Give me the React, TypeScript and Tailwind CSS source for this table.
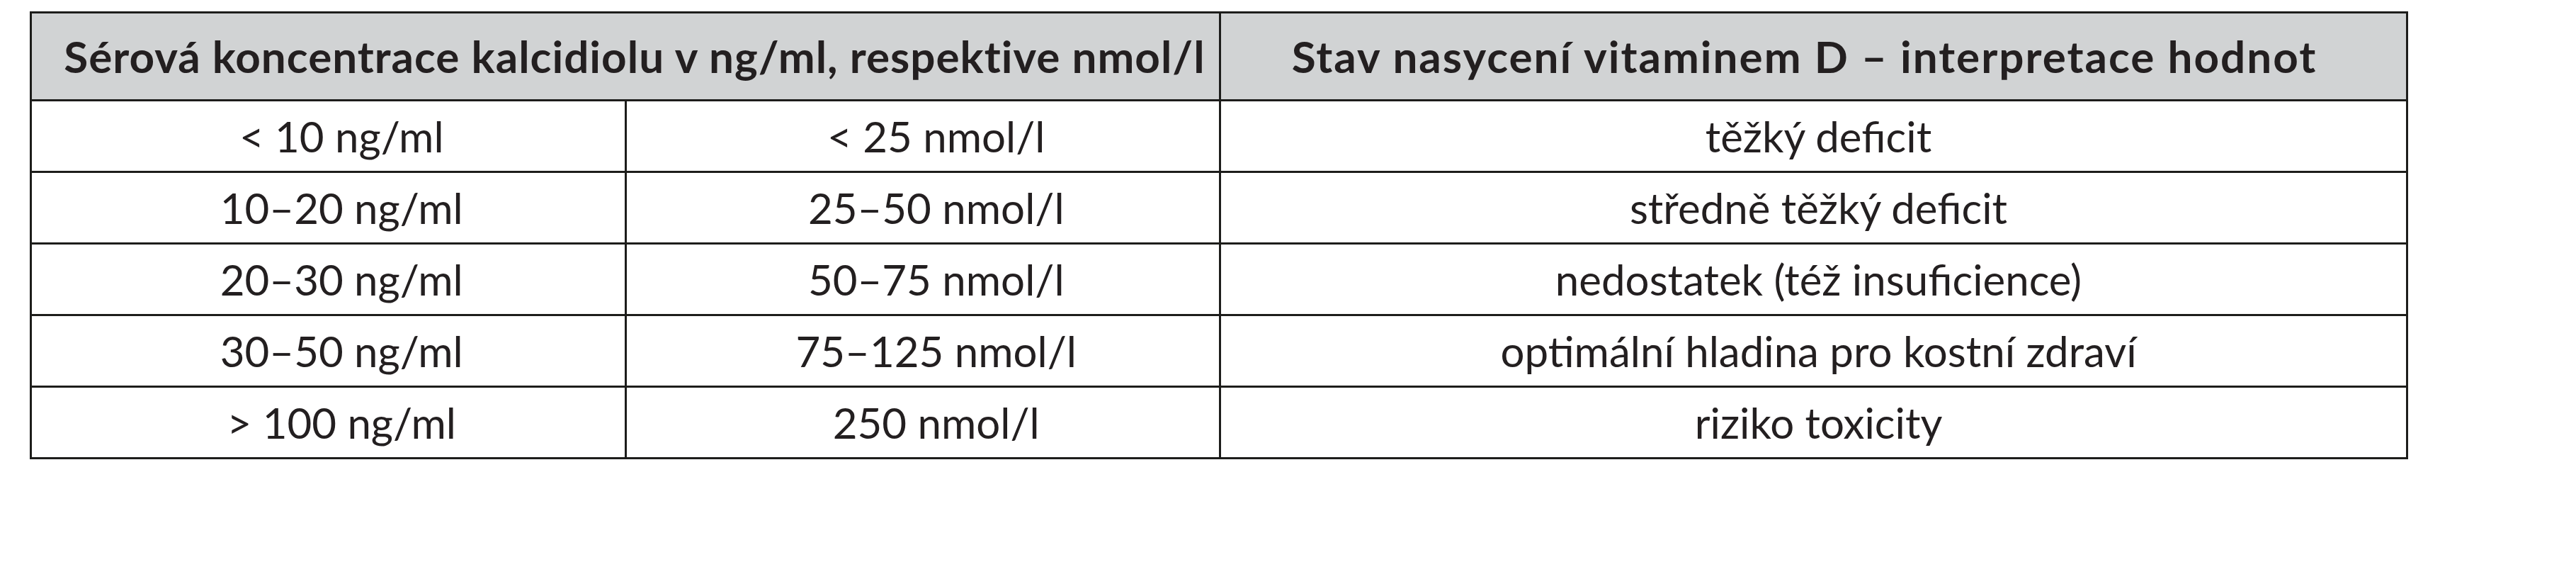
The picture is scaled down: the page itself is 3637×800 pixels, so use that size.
const rows = [
  { ng: '< 10 ng/ml', nmol: '< 25 nmol/l', state: 'těžký deficit' },
  { ng: '10–20 ng/ml', nmol: '25–50 nmol/l', state: 'středně těžký deficit' },
  { ng: '20–30 ng/ml', nmol: '50–75 nmol/l', state: 'nedostatek (též insuficience)' },
  { ng: '30–50 ng/ml', nmol: '75–125 nmol/l', state: 'optimální hladina pro kostní zdraví' },
  { ng: '> 100 ng/ml', nmol: '250 nmol/l', state: 'riziko toxicity' },
];

export default function App() {
  return (
    <div className="w-[3637px] h-[800px] bg-white pt-[16px] pl-[42px] font-['Lato',sans-serif] text-[#231f20]">
      <div className="w-[3358px] grid grid-cols-[1fr_1fr_2fr] gap-[3px] p-[3px] bg-[#1d1d1b]">
        {/* Header */}
        <div className="col-span-2 h-[121px] bg-[#d1d3d4] flex items-center justify-center pl-[26px] text-[62px] font-bold tracking-[1px]">
          Sérová koncentrace kalcidiolu v ng/ml, respektive nmol/l
        </div>
        <div className="h-[121px] bg-[#d1d3d4] flex items-center justify-center pr-[26px] text-[62px] font-bold tracking-[2px]">
          Stav nasycení vitaminem D – interpretace hodnot
        </div>

        {/* Body */}
        {rows.map((row) => (
          <>
            <div key={row.ng + 'a'} className="h-[98px] bg-white flex items-center justify-center pl-[38px] text-[60px]">
              {row.ng}
            </div>
            <div key={row.ng + 'b'} className="h-[98px] bg-white flex items-center justify-center pl-[38px] text-[60px]">
              {row.nmol}
            </div>
            <div key={row.ng + 'c'} className="h-[98px] bg-white flex items-center justify-center pl-[14px] text-[60px]">
              {row.state}
            </div>
          </>
        ))}
      </div>
    </div>
  );
}
